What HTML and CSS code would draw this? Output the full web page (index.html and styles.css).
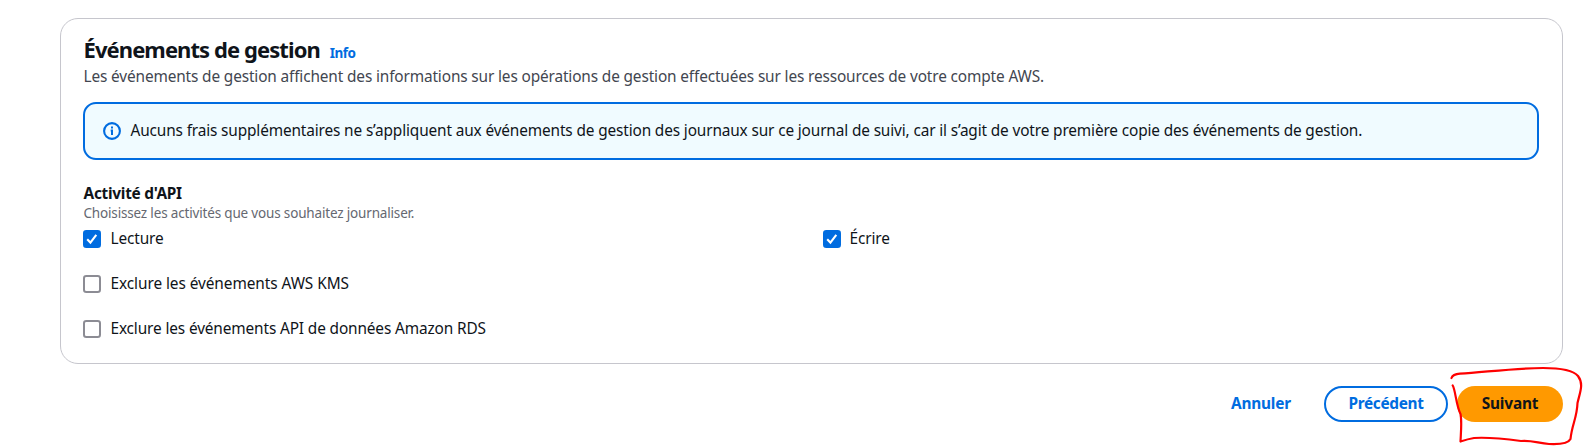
FILE: index.html
```html
<!DOCTYPE html>
<html lang="fr">
<head>
<meta charset="utf-8">
<title>Événements de gestion</title>
<link rel="stylesheet" href="styles.css">
</head>
<body>
<main class="page">
  <section class="card">
    <header class="card-header">
      <h2 class="title"><span class="title-text">Événements de gestion</span><a class="info">Info</a></h2>
      <p class="description"><span>Les événements de gestion affichent des informations sur les opérations de gestion effectuées sur les ressources de votre compte AWS.</span></p>
    </header>
    <div class="alert">
      <svg class="alert-icon" viewBox="0 0 18 18" width="18" height="18" fill="none" stroke="#006ce0" stroke-width="2.1">
        <circle cx="9" cy="9" r="7.9"/>
        <path d="M9 4.6v2M7.7 8.6H9V13" stroke-width="2"/>
      </svg>
      <span class="alert-text">Aucuns frais supplémentaires ne s’appliquent aux événements de gestion des journaux sur ce journal de suivi, car il s’agit de votre première copie des événements de gestion.</span>
    </div>
    <div class="field">
      <h3 class="field-label"><span>Activité d'API</span></h3>
      <p class="hint"><span>Choisissez les activités que vous souhaitez journaliser.</span></p>
      <div class="options">
        <label class="option"><span class="box checked"><svg viewBox="0 0 18 18" width="18" height="18"><path d="M4.2 9.3l3.2 3.3 5.9-7.8" fill="none" stroke="#fff" stroke-width="2.1"/></svg></span><span>Lecture</span></label>
        <label class="option near"><span class="box checked"><svg viewBox="0 0 18 18" width="18" height="18"><path d="M4.2 9.3l3.2 3.3 5.9-7.8" fill="none" stroke="#fff" stroke-width="2.1"/></svg></span><span>Écrire</span></label>
        <label class="option"><span class="box"></span><span class="kms">Exclure les événements AWS KMS</span></label>
        <label class="option"><span class="box"></span><span>Exclure les événements API de données Amazon RDS</span></label>
      </div>
    </div>
  </section>
  <footer class="actions">
    <a class="link-button"><span>Annuler</span></a>
    <button class="button outline"><span>Précédent</span></button>
    <button class="button primary"><span>Suivant</span></button>
  </footer>
  <svg class="marker" viewBox="0 0 147 88" width="147" height="88" fill="none" stroke="#fe0000" stroke-width="2.2" stroke-linecap="round" stroke-linejoin="round">
    <path d="M11.5 18C12.5 15 16 14 20 13.700C46 12 76 8 103 8C119 8 133 10 138 16C144 24 140 32 137.500 43C137 58 132 64 130.500 79C128 84 119 84.500 109 84C98 83 91 80 81 81C66 79 49 77 34 78C28 79 25 80 20.500 81.500C21 71 22 61 20.500 54C16 45 15.500 30 12.700 25.500"/>
  </svg>
</main>
</body>
</html>
```
FILE: styles.css
```css
* { box-sizing: border-box; }
body {
  margin: 0;
  background: #fff;
  color: #0f141a;
  font: 15.4px/22px "Noto Sans", "Open Sans", sans-serif;
}
.page {
  position: relative;
  height: 448px;
  padding: 18px 24px 0 60px;
  overflow: hidden;
  white-space: nowrap;
}
h2, h3, p { margin: 0; }
.card {
  height: 346px;
  padding: 16px 23px 0 22px;
  border: 1px solid #c6c6cd;
  border-radius: 18px;
}
.title { display: flex; align-items: baseline; gap: 10px; font-size: 22px; line-height: 28px; }
.title-text { letter-spacing: -0.92px; }
.info { color: #006ce0; font-size: 13.5px; letter-spacing: -0.55px; }
.card-header { padding-left: 0.5px; }
.description { margin-top: -1px; color: #424650; line-height: 22px; letter-spacing: -0.14px; }
.alert {
  display: flex;
  align-items: center;
  gap: 9.5px;
  height: 58px;
  margin-top: 14px;
  padding: 0 18px;
  border: 2px solid #006ce0;
  border-radius: 13px;
  background: #f0fbff;
}
.alert-text { letter-spacing: -0.143px; }
.field { margin-top: 23px; }
.field-label { padding-left: 0.5px; font-size: 15.4px; line-height: 22px; letter-spacing: -0.27px; }
.hint { margin-top: -1px; padding-left: 0.5px; color: #656871; font-size: 13.5px; line-height: 18px; letter-spacing: -0.17px; }
.options {
  display: grid;
  grid-template-columns: 740px 1fr;
  row-gap: 23px;
  margin-top: 6px;
  letter-spacing: -0.135px;
}
.option { display: flex; align-items: center; gap: 9.5px; height: 22px; }
.option.near { gap: 8.5px; }
.option:nth-child(3) { grid-column: 1 / -1; }
.kms { letter-spacing: -0.07px; }
.box { width: 18px; height: 18px; border: 2px solid #8c8c94; border-radius: 3.3px; }
.box.checked { border: 0; background: #006ce0; }
.box svg { display: block; }
.actions {
  display: flex;
  justify-content: flex-end;
  align-items: center;
  margin-top: 22px;
  font-weight: 700;
}
.link-button { width: 60px; margin-right: 33px; color: #006ce0; letter-spacing: -0.2px; }
.button {
  height: 36px;
  padding: 0;
  border: 0;
  border-radius: 18px;
  background: #fff;
  font: inherit;
  text-align: center;
}
.outline { width: 124px; margin-right: 9px; border: 2px solid #006ce0; color: #006ce0; letter-spacing: -0.33px; }
.primary { width: 106px; background: #f90; color: #0f141a; letter-spacing: -0.15px; }
.marker { position: absolute; left: 1440px; top: 360px; }
```
